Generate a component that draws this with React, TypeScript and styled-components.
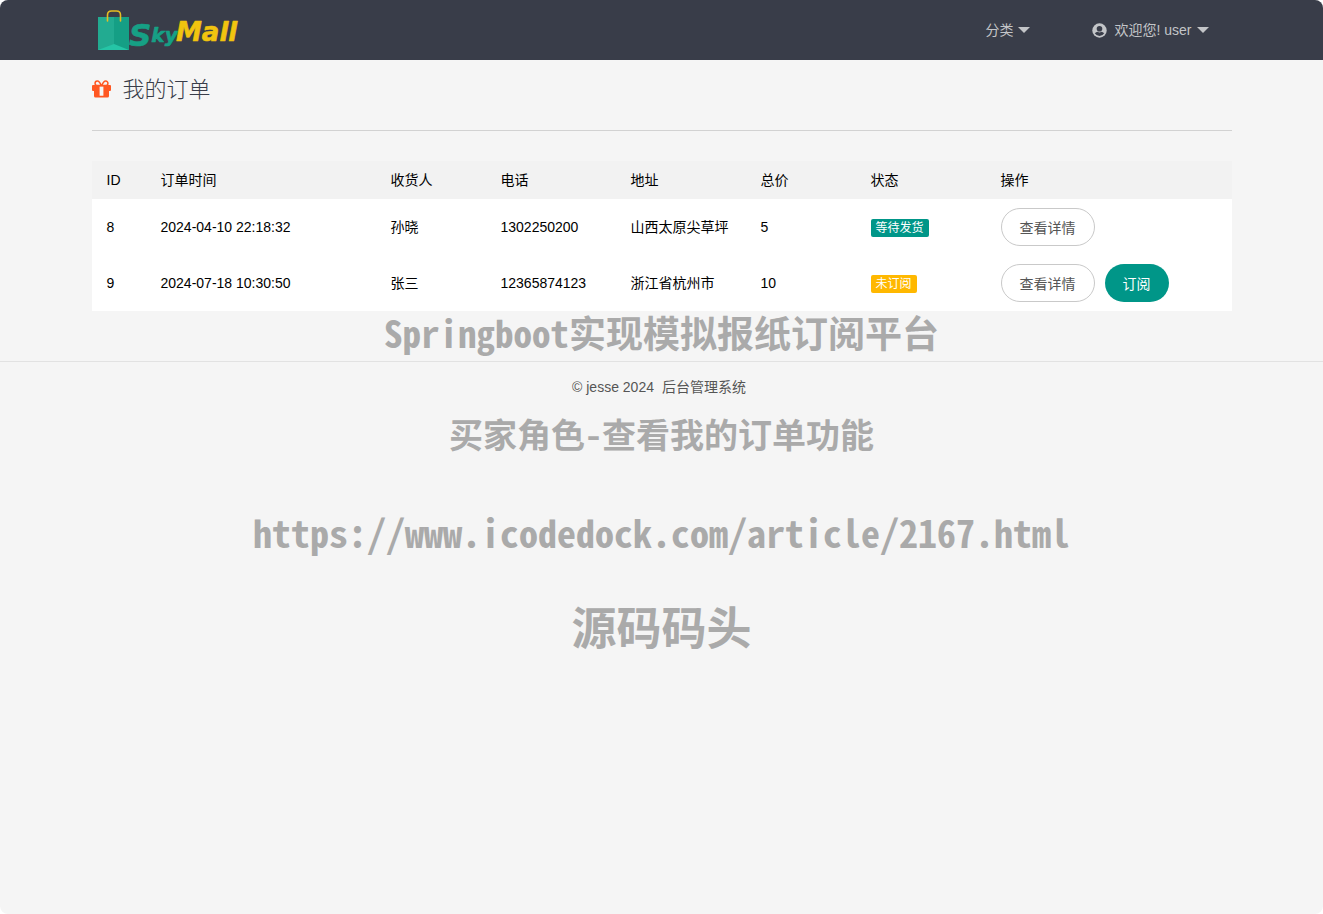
import React from "react";
import styled, { createGlobalStyle } from "styled-components";

const GlobalStyle = createGlobalStyle`
  * { box-sizing: border-box; }
  html { background: #fff; }
  body {
    margin: 0;
    font: 14px/24px "Liberation Sans", "Noto Sans CJK SC", sans-serif;
    color: #000;
  }
  a { color: inherit; text-decoration: none; }
  button { font-family: inherit; cursor: pointer; }
`;

const Page = styled.div`
  position: relative;
  min-height: 100vh;
  border-radius: 8px;
  overflow: hidden;
  background: #f5f5f5;
`;

const Container = styled.div`
  width: calc(100% - 32px);
  max-width: 1140px;
  margin: 0 auto;
`;

const Header = styled.header`
  background: #393d49;
`;

const HeaderInner = styled(Container)`
  display: flex;
  align-items: center;
  justify-content: space-between;
  height: 60px;
`;

const LogoLink = styled.a`
  display: block;
  height: 60px;
`;

const Nav = styled.nav`
  display: flex;
  gap: 62px;
  padding-right: 23px;
`;

const NavButton = styled.button`
  display: flex;
  align-items: center;
  padding: 0;
  border: 0;
  background: none;
  color: #c3c5c8;
  font-size: 14px;
  line-height: 24px;
`;

const Caret = styled.span`
  margin-left: 5px;
  border: 6px solid transparent;
  border-top-color: #c3c5c8;
  border-bottom: 0;
`;

const UserIcon = styled.svg`
  margin-right: 7px;
`;

const TitleBar = styled.div`
  display: flex;
  align-items: center;
  gap: 12px;
  height: 71px;
  padding-bottom: 10px;
  border-bottom: 1px solid #d2d2d2;
`;

const Title = styled.h1`
  margin: 0;
  font-size: 22px;
  line-height: 32px;
  font-weight: 300;
  color: #393d49;
`;

const Table = styled.table`
  width: 100%;
  margin-top: 30px;
  border-collapse: collapse;
  table-layout: fixed;
  background: #fff;
`;

const HeadCell = styled.th<{ $width?: number }>`
  width: ${(p) => (p.$width ? `${p.$width}px` : "auto")};
  height: 38px;
  padding: 0 15px;
  background: #f2f2f2;
  font-weight: 400;
  text-align: left;
`;

const Cell = styled.td`
  height: 56px;
  padding: 0 0 0 15px;
  white-space: nowrap;
`;

const Badge = styled.span<{ $color: string }>`
  display: inline-block;
  vertical-align: middle;
  padding: 0 5px;
  border-radius: 2px;
  background: ${(p) => p.$color};
  color: #fff;
  font-size: 12px;
  line-height: 18px;
`;

const Actions = styled.div`
  display: flex;
  gap: 10px;
`;

const ActionButton = styled.button<{ $primary?: boolean }>`
  height: 38px;
  padding: 0 18px;
  border: ${(p) => (p.$primary ? "0" : "1px solid #c9c9c9")};
  border-radius: 19px;
  background: ${(p) => (p.$primary ? "#009688" : "#fff")};
  color: ${(p) => (p.$primary ? "#fff" : "#555")};
  font-size: 14px;
`;

const Footer = styled.footer`
  display: flex;
  justify-content: center;
  gap: 8px;
  margin-top: 50px;
  padding: 13px 5px 0 0;
  border-top: 1px solid #e2e2e2;
  color: #555;
`;

const Watermark = styled.div`
  position: absolute;
  inset: 308px 0 auto;
  display: flex;
  flex-direction: column;
  align-items: center;
  color: #aaa;
  font-family: "Noto Sans Mono CJK SC", "Noto Sans CJK SC", monospace;
  font-weight: 700;
  white-space: nowrap;
  pointer-events: none;
`;

const WatermarkLine = styled.div<{ $size: number; $gap?: number }>`
  margin-top: ${(p) => p.$gap ?? 0}px;
  font-size: ${(p) => p.$size}px;
  line-height: 48px;
`;

const columns: [string, number?][] = [
  ["ID", 54],
  ["订单时间", 230],
  ["收货人", 110],
  ["电话", 130],
  ["地址", 130],
  ["总价", 110],
  ["状态", 130],
  ["操作"],
];

const orders = [
  { id: 8, time: "2024-04-10 22:18:32", name: "孙晓", phone: "1302250200", address: "山西太原尖草坪", total: 5, paid: true },
  { id: 9, time: "2024-07-18 10:30:50", name: "张三", phone: "12365874123", address: "浙江省杭州市", total: 10, paid: false },
];

function Logo() {
  return (
    <svg width="152" height="60" viewBox="0 0 152 60" role="img" aria-label="SkyMall">
      <path d="M6 17h16v33H6z" fill="#22ab91" />
      <path d="M22 17h15v33H22z" fill="#159f85" />
      <path d="M6 50l16-6 15 6z" fill="#25c5a6" />
      <path d="M15.500 21v-6q0-4 4-4h5q4 0 4 4v6" fill="none" stroke="#e5bd22" strokeWidth="1.6" strokeLinecap="round" />
      <g fontFamily="DejaVu Sans, sans-serif" fontWeight="700" fontStyle="italic" strokeWidth="0.6" strokeLinejoin="round">
        <text x="37" y="46" fill="#16a085" stroke="#16a085" fontSize="31">
          S<tspan y="42" fontSize="20">ky</tspan>
        </text>
        <text x="84" y="41" fill="#f1c40f" stroke="#f1c40f" fontSize="26">Mall</text>
      </g>
    </svg>
  );
}

function GiftIcon() {
  return (
    <svg width="19" height="20" viewBox="0 0 19 20" aria-hidden="true">
      <g fill="none" stroke="#ff5722" strokeWidth="1.5">
        <path d="M9.2 5.500C8 2.500 6.800 1 5.300 1a2.200 2.200 0 0 0 0 4.500zM9.800 5.500C11 2.500 12.200 1 13.700 1a2.200 2.200 0 0 1 0 4.500z" />
      </g>
      <path
        fill="#ff5722"
        fillRule="evenodd"
        d="M1 5h17q1 0 1 1v4q0 1-1 1h-1v5q0 1.500-1.500 1.500h-12Q2 17.500 2 16v-5H1q-1 0-1-1V6q0-1 1-1zM7.600 6.500v9.200h3.800V6.500z"
      />
    </svg>
  );
}

export default function App() {
  return (
    <>
      <GlobalStyle />
      <Page>
        <Header>
          <HeaderInner>
            <LogoLink href="#">
              <Logo />
            </LogoLink>
            <Nav>
              <NavButton type="button">
                分类
                <Caret />
              </NavButton>
              <NavButton type="button">
                <UserIcon width="15" height="15" viewBox="0 0 15 15" aria-hidden="true">
                  <circle cx="7.500" cy="7.500" r="7.200" fill="#c3c5c8" />
                  <circle cx="7.500" cy="5.800" r="2.800" fill="#393d49" />
                  <path d="M2.800 10.300q1.400-1.500 2.800-1.500 1.900 1.300 3.800 0 1.400 0 2.800 1.500-1.600 2.700-4.700 2.700t-4.700-2.700z" fill="#393d49" />
                </UserIcon>
                欢迎您! user
                <Caret />
              </NavButton>
            </Nav>
          </HeaderInner>
        </Header>

        <Container as="main">
          <TitleBar>
            <GiftIcon />
            <Title>我的订单</Title>
          </TitleBar>
          <Table>
            <thead>
              <tr>
                {columns.map(([label, width]) => (
                  <HeadCell key={label} $width={width} scope="col">
                    {label}
                  </HeadCell>
                ))}
              </tr>
            </thead>
            <tbody>
              {orders.map((o) => (
                <tr key={o.id}>
                  <Cell>{o.id}</Cell>
                  <Cell>{o.time}</Cell>
                  <Cell>{o.name}</Cell>
                  <Cell>{o.phone}</Cell>
                  <Cell>{o.address}</Cell>
                  <Cell>{o.total}</Cell>
                  <Cell>
                    <Badge $color={o.paid ? "#009688" : "#ffb800"}>{o.paid ? "等待发货" : "未订阅"}</Badge>
                  </Cell>
                  <Cell>
                    <Actions>
                      <ActionButton type="button">查看详情</ActionButton>
                      {!o.paid && (
                        <ActionButton type="button" $primary>
                          订阅
                        </ActionButton>
                      )}
                    </Actions>
                  </Cell>
                </tr>
              ))}
            </tbody>
          </Table>
        </Container>

        <Footer>
          <span>© jesse 2024</span>
          <a href="#">后台管理系统</a>
        </Footer>

        <Watermark>
          <WatermarkLine $size={37}>Springboot实现模拟报纸订阅平台</WatermarkLine>
          <WatermarkLine $size={34} $gap={54}>
            买家角色-查看我的订单功能
          </WatermarkLine>
          <WatermarkLine $size={38} $gap={50}>
            https://www.icodedock.com/article/2167.html
          </WatermarkLine>
          <WatermarkLine $size={45} $gap={46}>
            源码码头
          </WatermarkLine>
        </Watermark>
      </Page>
    </>
  );
}
